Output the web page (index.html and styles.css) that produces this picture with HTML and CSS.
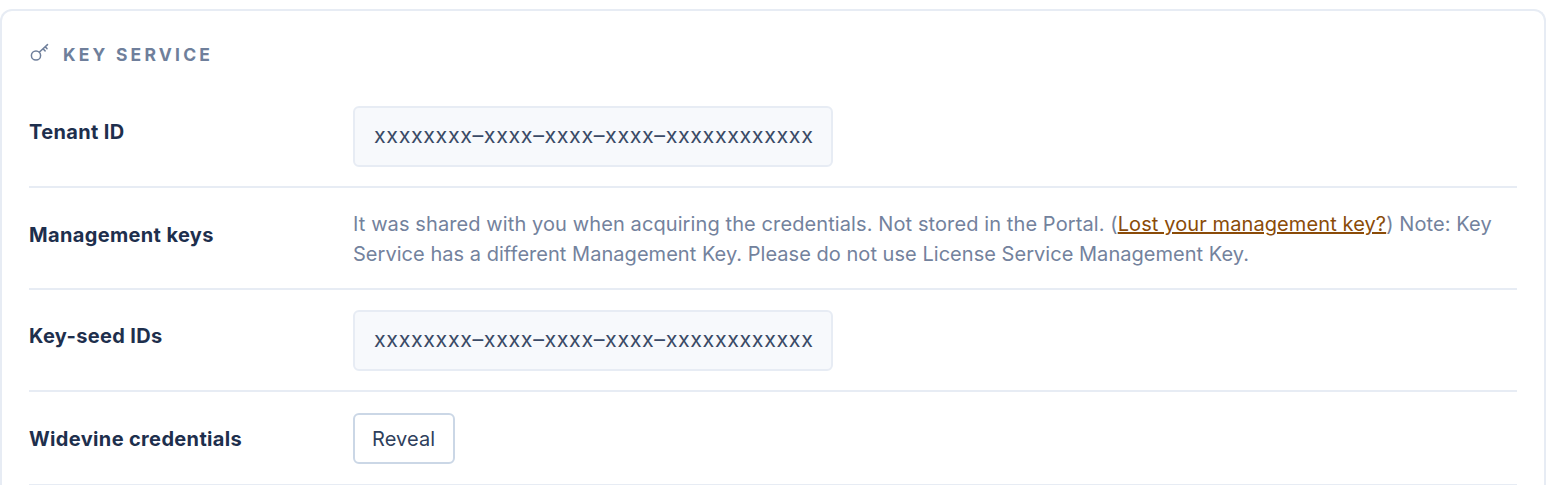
FILE: index.html
```html
<!DOCTYPE html>
<html lang="en">
<head>
    <meta charset="UTF-8">
    <title>Key Service</title>
    <link rel="stylesheet" href="styles.css">
</head>
<body>
    <div class="card">
        <div class="card-title">
            <svg class="key-icon" width="20" height="20" viewBox="0 0 20 20" fill="none" stroke="currentColor" stroke-width="1.5" stroke-linecap="round">
                <circle cx="6" cy="12.5" r="4.6"/>
                <path d="M9.5 9 17.5 1.6M13 5.8l2.1 2.1M15.2 3.8l1.8 1.8"/>
            </svg>
            <span>KEY SERVICE</span>
        </div>

        <div class="row">
            <div class="label label-top">Tenant ID</div>
            <div class="value"><div class="code-box">xxxxxxxx–xxxx–xxxx–xxxx–xxxxxxxxxxxx</div></div>
        </div>

        <div class="row row-center">
            <div class="label label-raised">Management keys</div>
            <div class="value help">It was shared with you when acquiring the credentials. Not stored in the Portal. (<a href="#">Lost your management key?</a>) Note: Key <span class="tight">Service has a different Management Key. Please do not use License Service Management Key.</span></div>
        </div>

        <div class="row">
            <div class="label label-top">Key-seed IDs</div>
            <div class="value"><div class="code-box">xxxxxxxx–xxxx–xxxx–xxxx–xxxxxxxxxxxx</div></div>
        </div>

        <div class="row row-center row-last">
            <div class="label label-lowered">Widevine credentials</div>
            <div class="value"><button class="button" type="button">Reveal</button></div>
        </div>
    </div>
</body>
</html>
```

FILE: styles.css
```css
* {
    box-sizing: border-box;
}
html, body {
    height: 485px;
    overflow: hidden;
}
body {
    margin: 0;
    padding: 9px 22px 0 0;
    background: #fff;
    font-family: Inter, "Liberation Sans", sans-serif;
    color: #1e2f4d;
}

.card {
    border: 2px solid #e7ecf4;
    border-radius: 12px;
    padding: 0 27px;
    height: 476px;
    margin-bottom: 0;
    border-bottom: 0;
    border-bottom-left-radius: 0;
    border-bottom-right-radius: 0;
}
.card-title {
    display: flex;
    align-items: center;
    gap: 13px;
    height: 75px;
    padding-top: 12px;
    color: #6f7f9b;
    font-size: 17.5px;
    font-weight: 700;
    letter-spacing: 3.2px;
}
.key-icon {
    flex: none;
    margin-left: 1px;
    margin-top: -4px;
}

.row {
    display: flex;
    padding: 20px 0;
    border-bottom: 2px solid #e7ecf4;
    height: 102px;
}
.row-center {
    align-items: center;
}
.row-last {
    height: 94px;
}
.label {
    flex: none;
    width: 324px;
    font-size: 20px;
    font-weight: 700;
    line-height: 30px;
    letter-spacing: 0.35px;
}
.label-top {
    padding-top: 11px;
}
.label-raised {
    padding-bottom: 6px;
}
.label-lowered {
    padding-top: 2px;
}
.value {
    flex: 1;
}

.code-box {
    width: 480px;
    height: 61px;
    padding: 0 19px;
    background: #f7f9fc;
    border: 2px solid #e7ecf4;
    border-radius: 6px;
    color: #3a4a66;
    font-size: 21.5px;
    line-height: 55px;
    letter-spacing: 0.58px;
    white-space: nowrap;
}
.help {
    padding-top: 2px;
    color: #73829d;
    font-size: 20px;
    line-height: 30px;
    letter-spacing: 0.1px;
}
.help a {
    color: #8a4b08;
}
.help .tight {
    letter-spacing: 0.035px;
}
.button {
    height: 51px;
    padding: 2px 18px 0 17px;
    background: #fff;
    border: 2px solid #cbd7e6;
    border-radius: 6px;
    color: #2f3f5c;
    font-family: inherit;
    font-size: 20px;
    letter-spacing: 0.1px;
}
```
